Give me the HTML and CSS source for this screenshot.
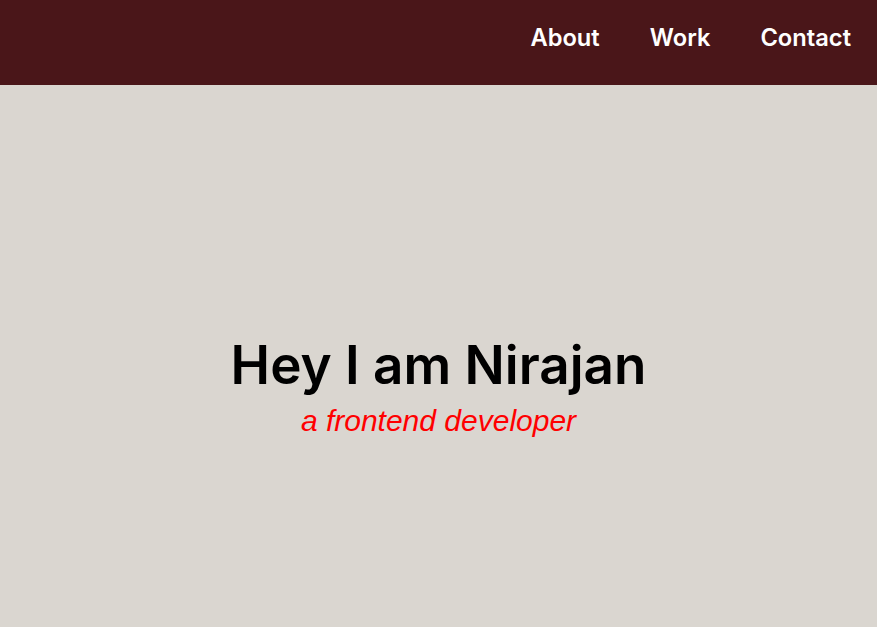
FILE: index.html
```html
<!DOCTYPE html>
<html lang="en">
<head>
<meta charset="utf-8">
<title>Nirajan</title>
<link rel="stylesheet" href="styles.css">
</head>
<body>
<header class="topbar">
  <nav class="nav">
    <a class="nav-link" href="#about">About</a>
    <a class="nav-link" href="#work">Work</a>
    <a class="nav-link" href="#contact">Contact</a>
  </nav>
</header>
<main class="hero">
  <h1 class="hero-title">Hey I am Nirajan</h1>
  <p class="hero-sub">a frontend developer</p>
</main>
</body>
</html>
```
FILE: styles.css
```css
* { box-sizing: border-box; }
html, body { margin: 0; padding: 0; height: 100%; }
body {
  background: #dad6d0;
  font-family: Inter, "Open Sans", sans-serif;
}
.topbar {
  height: 85px;
  background: #4a1619;
  display: flex;
  justify-content: flex-end;
  align-items: center;
  padding-right: 26px;
  padding-bottom: 10px;
}
.nav {
  display: flex;
  gap: 50px;
}
.nav-link {
  color: #ffffff;
  text-decoration: none;
  font-size: 23.7px;
  font-weight: 600;
}
.hero {
  height: calc(100% - 85px);
  display: flex;
  flex-direction: column;
  align-items: center;
  justify-content: center;
  padding-top: 60px;
}
.hero-title {
  margin: 0;
  font-size: 53px;
  font-weight: 600;
  color: #000;
  line-height: 1.2;
}
.hero-sub {
  margin: 6px 0 0;
  font-family: "Liberation Sans", Arial, sans-serif;
  font-style: italic;
  font-size: 30px;
  color: #ff0000;
}
```
